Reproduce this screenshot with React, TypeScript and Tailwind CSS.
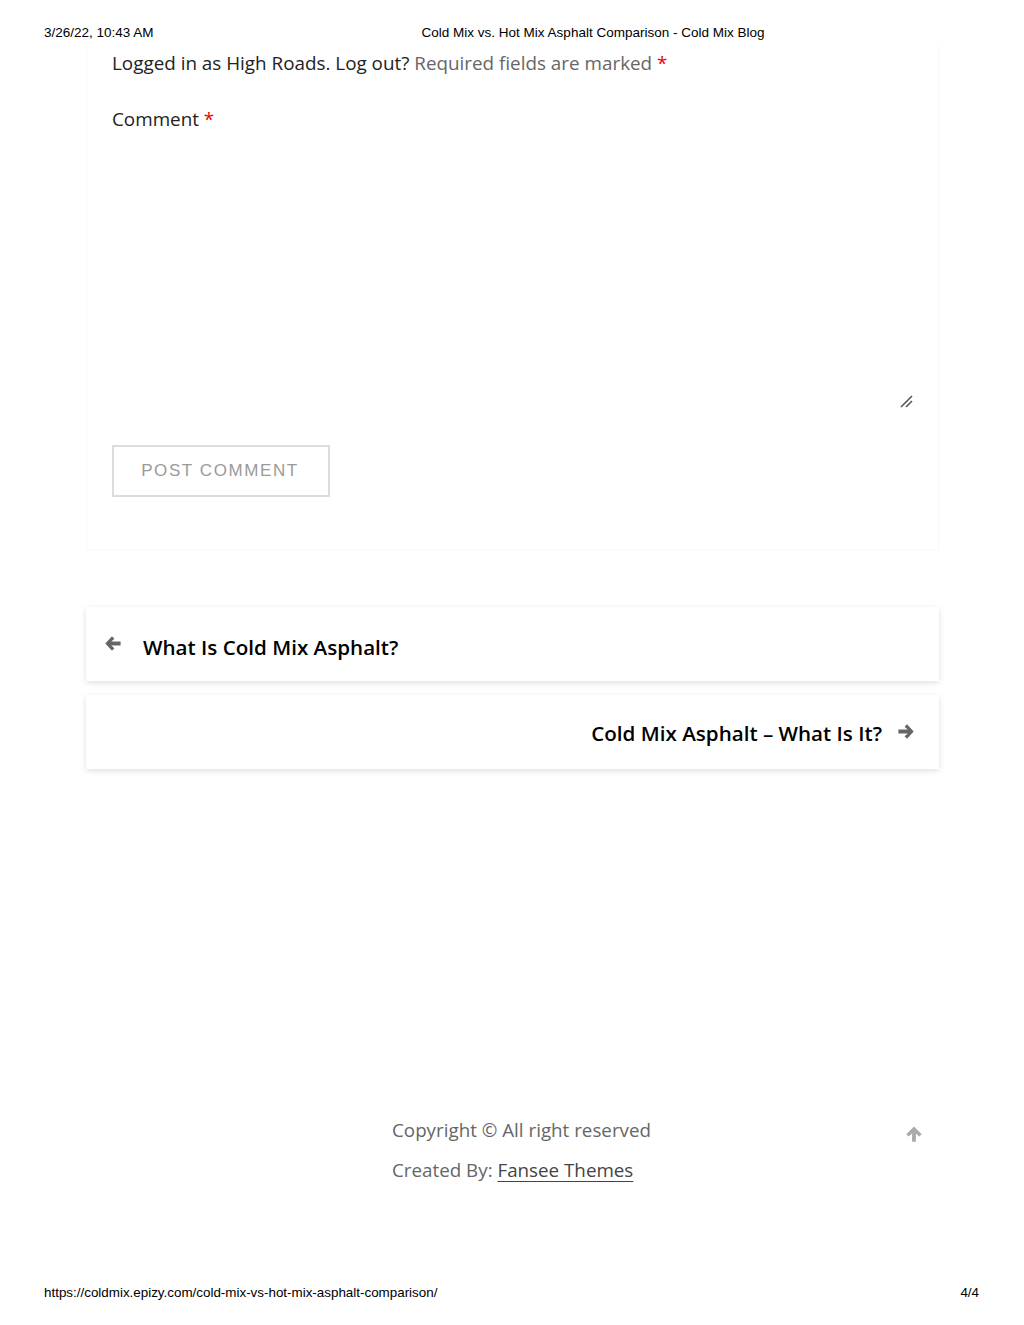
import React from "react";

function ArrowLeft({ className }: { className?: string }) {
  return (
    <svg className={className} width="16" height="15" viewBox="0 0 16 15">
      <path d="M7 0.3 L9.4 2.7 L6.3 5.6 L15.6 5.6 L15.6 9.4 L6.3 9.4 L9.4 12.3 L7 14.7 L0.3 7.5 Z" fill="#666" />
    </svg>
  );
}
function ArrowRight({ className }: { className?: string }) {
  return (
    <svg className={className} width="16" height="15" viewBox="0 0 16 15">
      <path d="M9 0.3 L6.6 2.7 L9.7 5.6 L0.4 5.6 L0.4 9.4 L9.7 9.4 L6.6 12.3 L9 14.7 L15.7 7.5 Z" fill="#666" />
    </svg>
  );
}
function ArrowUp({ className }: { className?: string }) {
  return (
    <svg className={className} width="16" height="16" viewBox="0 0 16 16">
      <path d="M0.3 8.2 L2.7 10.6 L6.1 7.4 L6.1 15.7 L9.9 15.7 L9.9 7.4 L13.3 10.6 L15.7 8.2 L8 0.5 Z" fill="#aaa" />
    </svg>
  );
}

export default function App() {
  const sans = { fontFamily: '"Open Sans", "Noto Sans", sans-serif' } as React.CSSProperties;
  return (
    <div className="relative flex min-h-[1325px] w-[1024px] flex-col bg-white" style={{ fontFamily: '"Liberation Sans", Arial, sans-serif' }}>
      {/* print header */}
      <div className="flex h-[45px] items-start px-[44px] pt-[25px] text-[13.5px] leading-[15px] text-black">
        <span>3/26/22, 10:43 AM</span>
        <span className="ml-[268px]">Cold Mix vs. Hot Mix Asphalt Comparison - Cold Mix Blog</span>
      </div>

      <div className="mx-[86px] w-[853px]" style={sans}>
        {/* comment card */}
        <div className="h-[505px] border-x border-b border-[#f8f8f8] px-[25px]">
          <p className="pt-[4px] text-[18.85px] leading-[28px] text-[#222]">
            Logged in as High Roads. Log out? <span className="text-[#666]">Required fields are marked</span>{" "}
            <span className="text-[#e00]">*</span>
          </p>
          <p className="mt-[28px] text-[18.85px] leading-[28px] text-[#222]">
            Comment <span className="text-[#e00]">*</span>
          </p>
          <div className="relative mt-[2px] h-[280px] w-[802px]">
            <svg className="absolute bottom-[7px] right-[0px]" width="14" height="14" viewBox="0 0 14 14">
              <line x1="1" y1="13" x2="12" y2="2" stroke="#555" strokeWidth="1.6" />
              <line x1="6" y1="13" x2="12" y2="7" stroke="#555" strokeWidth="1.6" />
            </svg>
          </div>
          <button
            className="mt-[30px] flex h-[52px] w-[218px] items-center justify-center border-2 border-[#dcdcdc] bg-white pr-[2px] text-[17px] tracking-[1.6px] text-[#9a9a9a]"
            style={{ fontFamily: '"Liberation Sans", Arial, sans-serif' }}
          >
            POST COMMENT
          </button>
        </div>

        {/* post navigation */}
        <div className="mt-[57px] flex h-[74px] items-center bg-white pl-[19px] pt-[2px] shadow-[0_2px_6px_rgba(0,0,0,0.12)]">
          <ArrowLeft className="mb-[4px]" />
          <span className="ml-[22px] pt-[5px] text-[20.6px] font-semibold text-black">What Is Cold Mix Asphalt?</span>
        </div>
        <div className="mt-[14px] flex h-[74px] items-center justify-end bg-white pr-[25px] shadow-[0_2px_6px_rgba(0,0,0,0.12)]">
          <span className="pt-[3px] text-[20.6px] font-semibold text-black">Cold Mix Asphalt – What Is It?</span>
          <ArrowRight className="mb-[2px] ml-[16px]" />
        </div>
      </div>

      {/* site footer */}
      <div className="mt-[347px] flex w-full" style={sans}>
        <div className="ml-[392px] flex flex-col gap-[12px] text-[18.8px] leading-[28px] text-[#666]">
          <span>Copyright © All right reserved</span>
          <span>
            Created By: <span className="text-[#444] underline underline-offset-[4px]">Fansee Themes</span>
          </span>
        </div>
        <div className="ml-auto mr-[102px] mt-[10px]">
          <ArrowUp />
        </div>
      </div>

      {/* print footer */}
      <div className="mt-auto flex h-[40px] items-start justify-between px-[44px] text-[13.4px] leading-[15px] text-black">
        <span>https://coldmix.epizy.com/cold-mix-vs-hot-mix-asphalt-comparison/</span>
        <span className="mr-[1px]">4/4</span>
      </div>
    </div>
  );
}
